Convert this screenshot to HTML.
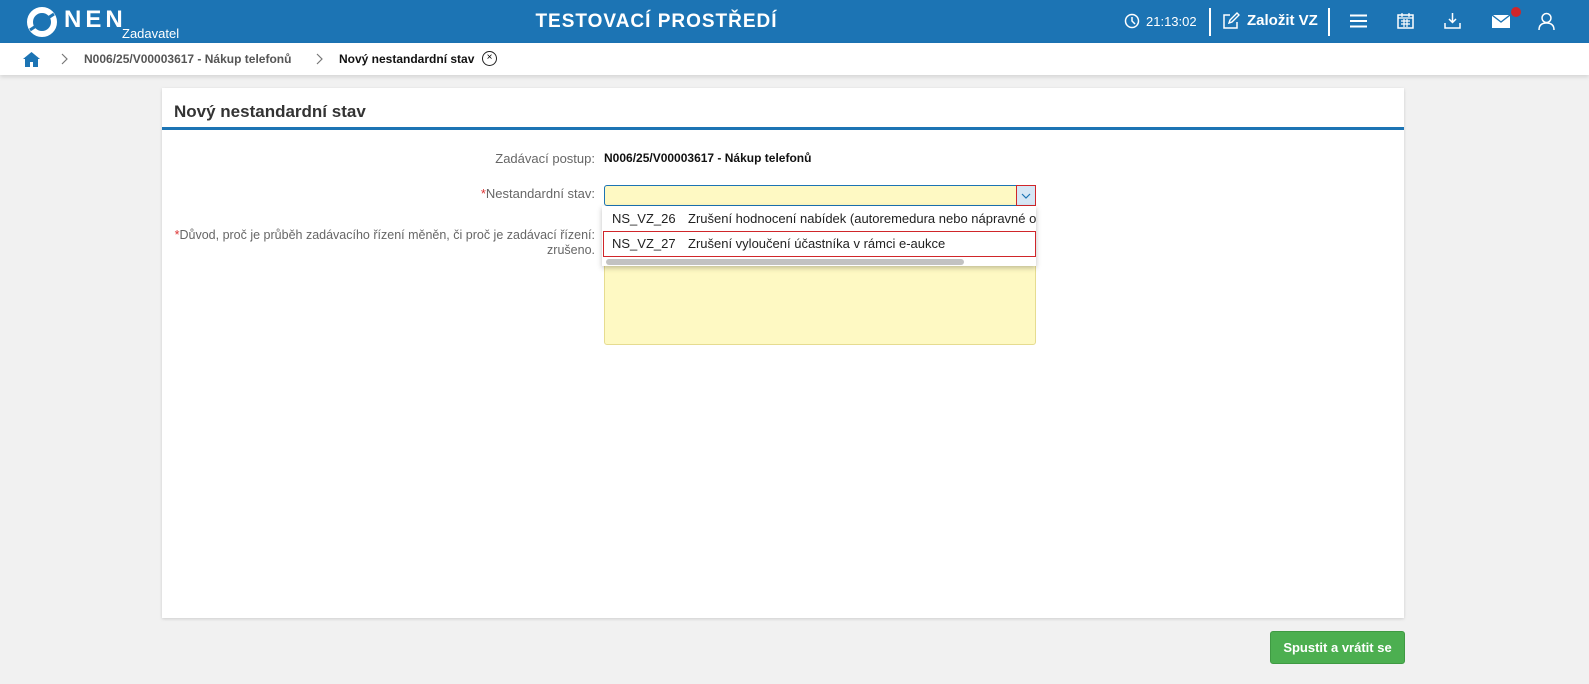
<!DOCTYPE html>
<html><head><meta charset="utf-8"><style>
*{box-sizing:border-box;margin:0;padding:0}
body{width:1589px;height:684px;background:#f1f1f1;font-family:"Liberation Sans",sans-serif;position:relative;overflow:hidden}
.top{position:absolute;left:0;top:0;width:1589px;height:43px;background:#1c74b4;color:#fff}
.ab{position:absolute}
.bc{position:absolute;left:0;top:43px;width:1589px;height:32px;background:#fff;box-shadow:0 2px 4px rgba(0,0,0,.12);font-size:12px;font-weight:bold}
.card{position:absolute;left:162px;top:88px;width:1242px;height:530px;background:#fff;box-shadow:0 1px 3px rgba(0,0,0,.15)}
.lbl{position:absolute;font-size:13px;color:#666;text-align:right;white-space:nowrap}
.req{color:#d33}
</style></head><body>
<div class="top">
 <svg class="ab" style="left:26px;top:6px" width="32" height="32" viewBox="0 0 32 32"><circle cx="16" cy="16" r="12" fill="none" stroke="#fff" stroke-width="6"/><path d="M4 24 L28 8" stroke="#1c74b4" stroke-width="3"/></svg>
 <div class="ab" style="left:64px;top:6px;font-size:24px;font-weight:bold;letter-spacing:4px">NEN</div>
 <div class="ab" style="left:122px;top:26px;font-size:13px">Zadavatel</div>
 <div class="ab" style="left:0;width:1313px;text-align:center;top:11px;font-size:19px;font-weight:bold;letter-spacing:1px">TESTOVACÍ PROSTŘEDÍ</div>
 <svg class="ab" style="left:1124px;top:13px" width="16" height="16" viewBox="0 0 16 16"><circle cx="8" cy="8" r="6.5" fill="none" stroke="#fff" stroke-width="1.5"/><path d="M8 4v4l3 3" stroke="#fff" stroke-width="1.5" fill="none"/></svg>
 <div class="ab" style="left:1146px;top:14px;font-size:13px">21:13:02</div>
 <div class="ab" style="left:1209px;top:8px;width:2px;height:28px;background:#fff"></div>
 <svg class="ab" style="left:1222px;top:12px" width="18" height="18" viewBox="0 0 18 18"><path d="M8 3H2v13h13V10" fill="none" stroke="#fff" stroke-width="1.5"/><path d="M7 11l1-3 7-7 2 2-7 7z" fill="none" stroke="#fff" stroke-width="1.4"/></svg>
 <div class="ab" style="left:1247px;top:12px;font-size:15px;font-weight:bold">Založit VZ</div>
 <div class="ab" style="left:1328px;top:8px;width:2px;height:28px;background:#fff"></div>
 <svg class="ab" style="left:1350px;top:14px" width="17" height="14"><path d="M0 1.5h17M0 7h17M0 12.5h17" stroke="#fff" stroke-width="2"/></svg>
 <svg class="ab" style="left:1397px;top:12px" width="17" height="17" viewBox="0 0 17 17"><rect x="1" y="3" width="15" height="13" fill="none" stroke="#fff" stroke-width="1.5"/><path d="M1 6h15M5 1v4M12 1v4M4 9h9M4 12h9M7 7v8M10 7v8" stroke="#fff" stroke-width="1.2"/></svg>
 <svg class="ab" style="left:1444px;top:12px" width="17" height="18" viewBox="0 0 17 18"><path d="M8.5 1v9M5 7l3.5 3.5L12 7M1 11v5h15v-5" fill="none" stroke="#fff" stroke-width="1.5"/></svg>
 <svg class="ab" style="left:1492px;top:15px" width="18" height="13"><rect x="0" y="0" width="18" height="13" fill="#fff"/><path d="M0 0l9 7 9-7" fill="none" stroke="#1c74b4" stroke-width="1.3"/></svg>
 <div class="ab" style="left:1511px;top:7px;width:10px;height:10px;border-radius:50%;background:#d0262a"></div>
 <svg class="ab" style="left:1538px;top:12px" width="17" height="19" viewBox="0 0 17 19"><circle cx="8.5" cy="6" r="4.5" fill="none" stroke="#fff" stroke-width="1.5"/><path d="M1 18c0-5 3-7 7.5-7s7.5 2 7.5 7" fill="none" stroke="#fff" stroke-width="1.5"/></svg>
</div>
<div class="bc">
 <svg class="ab" style="left:23px;top:8px" width="17" height="16" viewBox="0 0 17 16"><path d="M8.5 1L0 8h2v8h5v-5h3v5h5V8h2z" fill="#1c74b4"/></svg>
 <svg class="ab" style="left:61px;top:10px" width="8" height="12"><path d="M1 1l5 5-5 5" fill="none" stroke="#777" stroke-width="1.2"/></svg>
 <div class="ab" style="left:84px;top:9px;color:#555">N006/25/V00003617 - Nákup telefonů</div>
 <svg class="ab" style="left:316px;top:10px" width="8" height="12"><path d="M1 1l5 5-5 5" fill="none" stroke="#777" stroke-width="1.2"/></svg>
 <div class="ab" style="left:339px;top:9px;color:#111">Nový nestandardní stav</div>
 <div class="ab" style="left:482px;top:8px;width:15px;height:15px;border:1.3px solid #222;border-radius:50%;font-size:10px;text-align:center;line-height:12px;font-weight:normal">×</div>
</div>
<div class="card">
 <div class="ab" style="left:12px;top:14px;font-size:17px;font-weight:bold;color:#333">Nový nestandardní stav</div>
 <div class="ab" style="left:0;top:39px;width:1242px;height:3px;background:#1c74b4"></div>
 <div class="lbl" style="right:809px;top:63px">Zadávací postup:</div>
 <div class="ab" style="left:442px;top:63px;font-size:12px;font-weight:bold;color:#111">N006/25/V00003617 - Nákup telefonů</div>
 <div class="lbl" style="right:809px;top:98px"><span class="req">*</span>Nestandardní stav:</div>
 <div class="ab" style="left:442px;top:97px;width:432px;height:21px;background:#fef9c3;border:1px solid #1c74b4;border-radius:3px"></div>
 <div class="ab" style="left:854px;top:97px;width:20px;height:21px;background:#d6e6f5;border:1px solid #d0262a"><svg width="18" height="19"><path d="M5 8l4 4 4-4" fill="none" stroke="#1c74b4" stroke-width="1.2"/></svg></div>
 <div class="lbl" style="right:809px;top:140px;line-height:15px;font-size:12.5px"><span class="req">*</span>Důvod, proč je průběh zadávacího řízení měněn, či proč je zadávací řízení:<br>zrušeno.</div>
 <div class="ab" style="left:442px;top:140px;width:432px;height:117px;background:#fef9c3;border:1px solid #e6dc90;border-radius:3px"></div>
 <div class="ab" style="left:440px;top:118px;width:434px;height:60px;background:#fff;box-shadow:0 2px 5px rgba(0,0,0,.25);font-size:13px;color:#222;overflow:hidden">
  <div class="ab" style="left:10px;top:5px">NS_VZ_26</div>
  <div class="ab" style="left:86px;top:5px;white-space:nowrap">Zrušení hodnocení nabídek (autoremedura nebo nápravné opatření)</div>
  <div class="ab" style="left:1px;top:25px;width:433px;height:26px;border:1px solid #d0262a"></div>
  <div class="ab" style="left:10px;top:30px">NS_VZ_27</div>
  <div class="ab" style="left:86px;top:30px">Zrušení vyloučení účastníka v rámci e-aukce</div>
  <div class="ab" style="left:4px;top:53px;width:358px;height:6px;background:#c2c2c2;border-radius:3px"></div>
 </div>
</div>
<div class="ab" style="left:1270px;top:631px;width:135px;height:33px;background:#4caf50;border:1px solid #3f9a43;border-radius:3px;color:#fff;font-size:13px;font-weight:bold;text-align:center;line-height:31px">Spustit a vrátit se</div>
</body></html>
